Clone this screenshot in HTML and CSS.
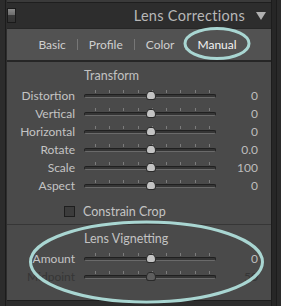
FILE: index.html
```html
<!DOCTYPE html>
<html lang="en">
<head>
  <meta charset="UTF-8">
  <title>Lens Corrections</title>
  <link rel="stylesheet" href="styles.css">
</head>
<body>
  <div class="frame">
    <div class="gutter"></div>

    <div class="column">
      <div class="prev-panel"></div>

      <div class="header">
        <span class="toggle"></span>
        <span class="title">Lens Corrections</span>
        <span class="arrow"></span>
      </div>

      <div class="tabs">
        <span class="tab">Basic</span>
        <span class="sep"></span>
        <span class="tab">Profile</span>
        <span class="sep"></span>
        <span class="tab">Color</span>
        <span class="sep"></span>
        <span class="tab active">Manual</span>
      </div>

      <div class="panel">
        <div class="section">
          <div class="heading">Transform</div>
          <div class="row"><span class="label">Distortion</span><div class="slider"><span class="ticks"></span><span class="track"></span><span class="thumb"></span></div><span class="value">0</span></div>
          <div class="row"><span class="label">Vertical</span><div class="slider"><span class="ticks"></span><span class="track"></span><span class="thumb"></span></div><span class="value">0</span></div>
          <div class="row"><span class="label">Horizontal</span><div class="slider"><span class="ticks"></span><span class="track"></span><span class="thumb"></span></div><span class="value">0</span></div>
          <div class="row"><span class="label">Rotate</span><div class="slider"><span class="ticks"></span><span class="track"></span><span class="thumb"></span></div><span class="value">0.0</span></div>
          <div class="row"><span class="label">Scale</span><div class="slider"><span class="ticks"></span><span class="track"></span><span class="thumb"></span></div><span class="value">100</span></div>
          <div class="row"><span class="label">Aspect</span><div class="slider"><span class="ticks"></span><span class="track"></span><span class="thumb"></span></div><span class="value">0</span></div>

          <div class="check-row">
            <span class="checkbox"></span>
            <span class="check-label">Constrain Crop</span>
          </div>
        </div>

        <div class="section vignetting">
          <div class="heading">Lens Vignetting</div>
          <div class="row"><span class="label">Amount</span><div class="slider"><span class="ticks"></span><span class="track"></span><span class="thumb"></span></div><span class="value">0</span></div>
          <div class="row disabled"><span class="label">Midpoint</span><div class="slider"><span class="ticks"></span><span class="track"></span><span class="thumb"></span></div><span class="value">50</span></div>
        </div>
      </div>
    </div>

    <div class="rail"></div>

    <!-- annotation rings drawn over the screenshot -->
    <svg class="marks" width="281" height="306" viewBox="0 0 281 306">
      <ellipse cx="217" cy="43.5" rx="32" ry="15" />
      <ellipse cx="146.5" cy="262" rx="116" ry="40" />
    </svg>
  </div>
</body>
</html>
```

FILE: styles.css
```css
body {
  margin: 0;
  background: #2a2a2a;
  font-family: Lato, 'Open Sans', 'Liberation Sans', sans-serif;
  color: #c8c8c8;
}

.frame {
  position: relative;
  display: flex;
  width: 281px;
  height: 306px;
  overflow: hidden;
}

.gutter {
  width: 5px;
  border-right: 1px solid #1c1c1c;
  background: #2c2c2c;
}

.column {
  width: 265px;
  display: flex;
  flex-direction: column;
  background: #2d2d2d;
}

.rail {
  width: 4px;
  border-left: 1px solid #1c1c1c;
  border-right: 1px solid #1c1c1c;
  background: #262626;
}

.prev-panel {
  height: 2px;
  border-bottom: 1px solid #1e1e1e;
  background: #3a3a3a;
  margin-left: 1px;
}

.header {
  height: 25px;
  display: flex;
  align-items: center;
  padding: 0 4px 0 1px;
}

.toggle {
  width: 7px;
  height: 13px;
  border: 1px solid #1a1a1a;
  background: linear-gradient(#8a8a8a 0, #6a6a6a 50%, #3a3a3a 50%, #333 100%);
}

.title {
  margin-left: auto;
  font-size: 14.5px;
  color: #b8b8b8;
  letter-spacing: 0.3px;
}

.arrow {
  margin-left: 11px;
  margin-right: 1px;
  width: 0;
  height: 0;
  border-left: 5px solid transparent;
  border-right: 5px solid transparent;
  border-top: 8px solid #b0b0b0;
}

.tabs {
  height: 31px;
  margin-left: 1px;
  border-top: 1px solid #262626;
  border-bottom: 2px solid #262626;
  background: #525252;
  display: flex;
  align-items: center;
  justify-content: center;
  gap: 11px;
  padding-right: 3px;
  font-size: 12px;
}

.tab {
  color: #cfcfcf;
}

.tab.active {
  color: #f2f2f2;
}

.sep {
  width: 1px;
  height: 11px;
  background: #777;
}

.panel {
  flex: 1;
  margin-left: 1px;
  background: #4a4a4a;
  border-bottom: 1px solid #1e1e1e;
  margin-bottom: 5px;
}

.section {
  padding-top: 6px;
}

.heading {
  padding-left: 77px;
  font-size: 12.5px;
  line-height: 16px;
  color: #c2c2c2;
  margin-bottom: 2px;
}

.row {
  display: grid;
  grid-template-columns: 68px 132px 1fr;
  column-gap: 9px;
  height: 18px;
  align-items: center;
  font-size: 12px;
}

.label {
  text-align: right;
  color: #c4c4c4;
}

.value {
  text-align: right;
  padding-right: 13px;
  color: #bdbdbd;
}

.slider {
  position: relative;
  height: 18px;
}

.ticks {
  position: absolute;
  left: 11px;
  top: 4px;
  width: 116px;
  height: 3px;
  background: repeating-linear-gradient(to right, #7c7c7c 0 1px, transparent 1px 14.25px);
}

.track {
  position: absolute;
  left: 0;
  right: 0;
  top: 8px;
  height: 2px;
  border: 1px solid #202020;
  border-bottom-color: #6a6a6a;
  border-radius: 3px;
  background: #353535;
}

.thumb {
  position: absolute;
  left: 62px;
  top: 5px;
  width: 10px;
  height: 9px;
  background: #c4c4c4;
  border: 1px solid #2a2a2a;
  border-radius: 50% 50% 4px 4px / 85% 85% 4px 4px;
  box-sizing: border-box;
}

.check-row {
  display: flex;
  align-items: center;
  gap: 8px;
  height: 16px;
  margin-top: 9px;
  padding-left: 57px;
  padding-bottom: 5px;
  border-bottom: 1px solid #363636;
  font-size: 12.5px;
}

.checkbox {
  width: 9px;
  height: 9px;
  border: 1px solid #1e1e1e;
  background: #3c3c3c;
}

.check-label {
  color: #c4c4c4;
}

.vignetting {
  padding-top: 6px;
}

.disabled .label,
.disabled .value {
  color: #363636;
}

.disabled .thumb {
  background: #5e5e5e;
}

.marks {
  position: absolute;
  left: 0;
  top: 0;
  pointer-events: none;
}

.marks ellipse {
  fill: none;
  stroke: #a9d6d2;
  stroke-width: 3;
}
```
